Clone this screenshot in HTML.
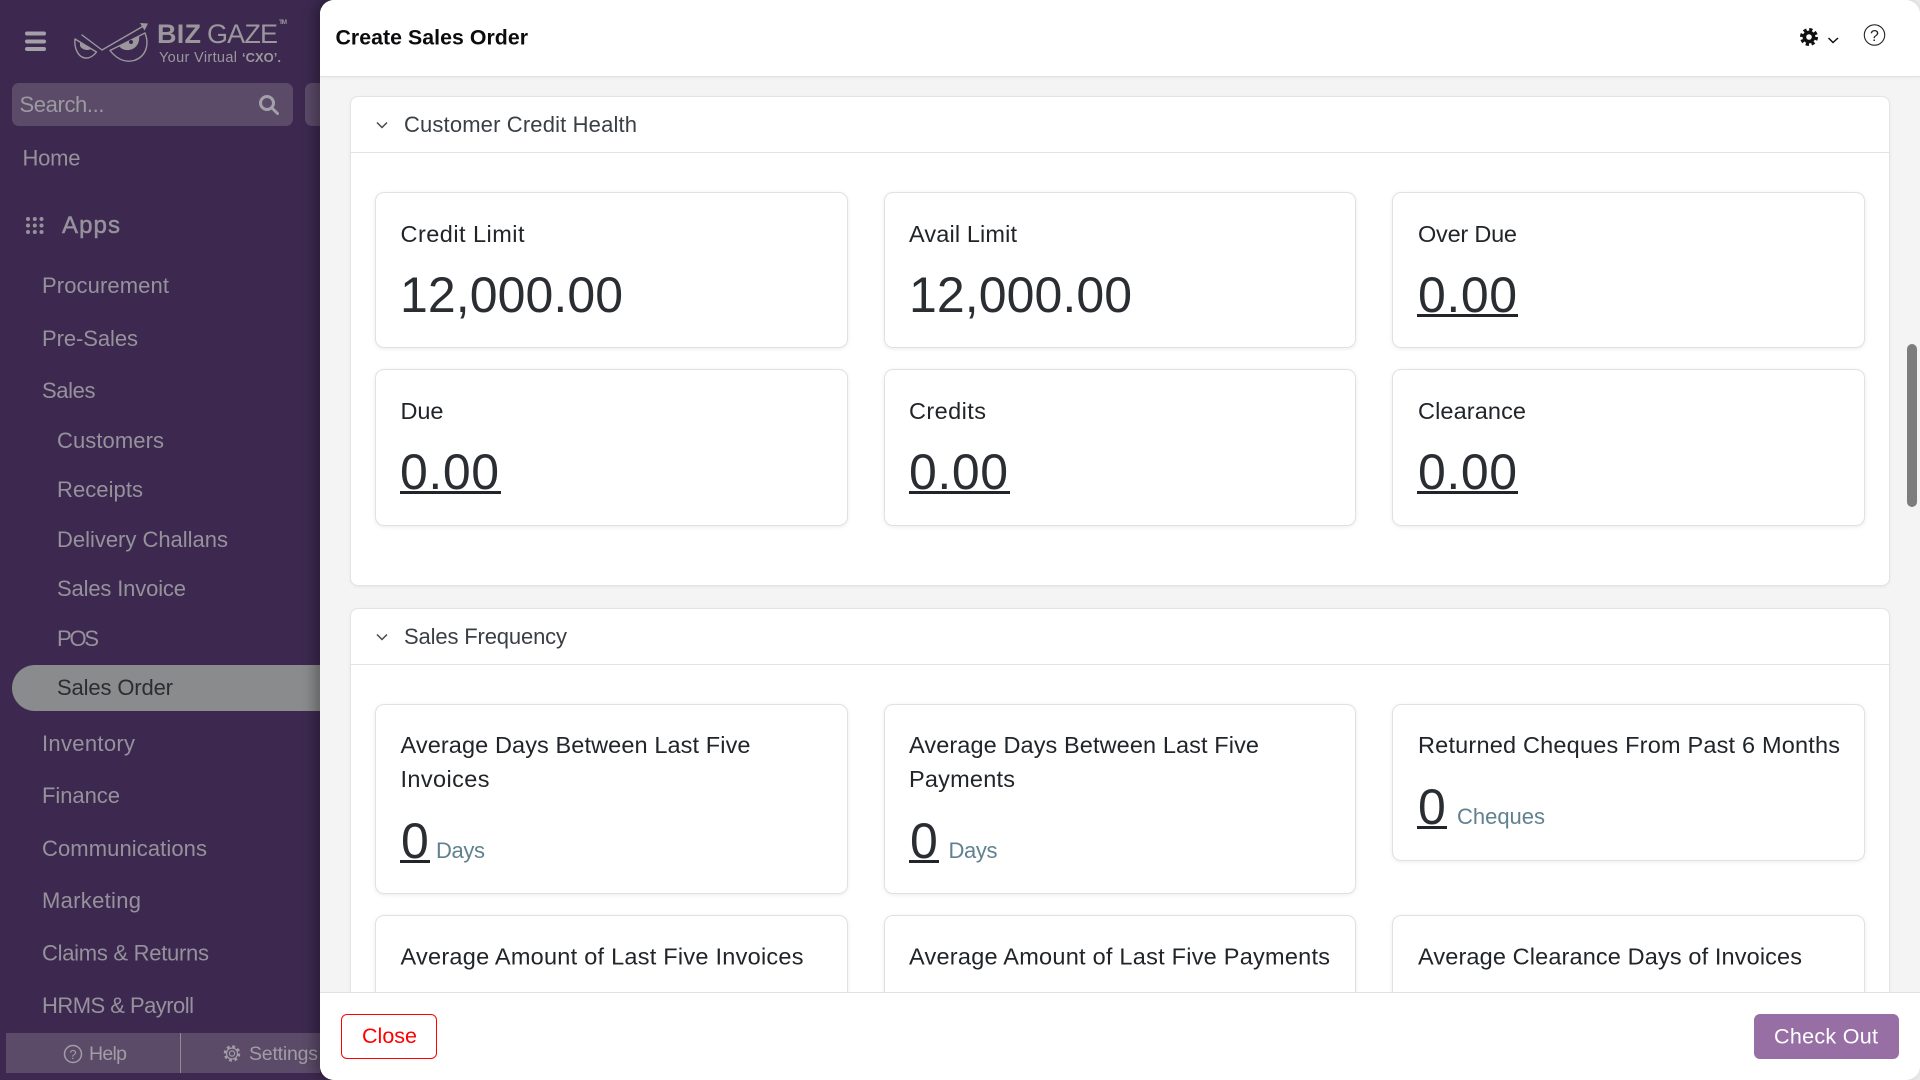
<!DOCTYPE html>
<html lang="en">
<head>
<meta charset="utf-8">
<title>Create Sales Order</title>
<style>
html,body{margin:0;padding:0;width:1920px;height:1080px;overflow:hidden;background:#3d2950;font-family:"Liberation Sans",Arial,sans-serif}
.abs,svg.layer{position:absolute}
svg.layer{left:0;top:0;width:1920px;height:1080px;overflow:hidden}
.search{background:#5b4a68;border-radius:7px;height:43px;top:83px}
.pill{left:12px;top:665px;width:308px;height:46px;background:#8a8b8c;border-radius:23px 0 0 23px}
.bottombar{left:6px;top:1033px;width:314px;height:40px;background:#5b4a68}
.bottombar i{position:absolute;left:174px;top:0;width:1px;height:40px;background:#8f8a94}
.panel{left:320px;top:0;width:1600px;height:1080px;background:#f4f4f5;border-radius:14px;overflow:hidden;box-shadow:-6px 0 12px rgba(0,0,0,.28)}
.rightbg{left:1880px;top:0;width:40px;height:1080px;background:#ececec}
.clip{left:320px;top:0;width:1600px;height:1080px;overflow:hidden}
.clip>div{position:absolute}
.head{left:320px;top:0;width:1600px;height:76px;background:#fff;border-bottom:1px solid #dfe1e6;border-radius:14px 14px 0 0;box-shadow:0 1px 4px rgba(0,0,0,.05)}
.foot{left:320px;top:992px;width:1600px;height:88px;background:#fff;border-top:1px solid #dfe1e6;box-sizing:border-box;border-radius:0 0 14px 14px}
.thumb{left:1907px;top:344px;width:10px;height:163px;background:#7d7d7d;border-radius:5px}
.section{left:30px;width:1540px;box-sizing:border-box;background:#fff;border:1px solid #e1e3e8;border-radius:8px;box-shadow:0 1px 3px rgba(0,0,0,.06)}
.line{left:31px;width:1538px;height:1px;background:#e1e3e8}
.card{box-sizing:border-box;background:#fff;border:1px solid #dfe1e6;border-radius:9px;box-shadow:0 1px 4px rgba(0,0,0,.08)}
.c1{left:55px;width:473px}.c2{left:564px;width:472px}.c3{left:1072px;width:473px}
.btn{box-sizing:border-box;top:1014px;height:45px;border-radius:6px}
.close{left:341px;width:96px;background:#fff;border:1px solid #f00}
.check{left:1754px;width:145px;background:#976fa5}
text{font-family:"Liberation Sans",Arial,sans-serif}
.s{font-size:22px;fill:#96929c}
.sd{font-size:22px;fill:#2c2c31}
.lb{font-size:23.5px;fill:#212529}
.val{font-size:50px;fill:#2a2e33}
.hd{font-size:22px;fill:#3a3f45}
.unit{font-size:22px;fill:#60818f}
.lg{fill:#9a989d}
</style>
</head>
<body>

<!-- sidebar -->
<div class="abs search" style="left:12px;width:281px"></div>
<div class="abs search" style="left:305px;width:20px"></div>
<div class="abs pill"></div>
<div class="abs bottombar"><i></i></div>

<svg class="layer" viewBox="0 0 1920 1080">
  <!-- hamburger -->
  <g fill="#a3a0a8">
    <rect x="25" y="31.5" width="21" height="4" rx="2"/>
    <rect x="25" y="39.5" width="21" height="4" rx="2"/>
    <rect x="25" y="47" width="21" height="4" rx="2"/>
  </g>
  <!-- logo -->
  <g fill="none" stroke="#9a989d" stroke-width="1.4" stroke-linejoin="round" stroke-linecap="round">
    <path d="M82 35L102 50L146 24.5"/>
    <path d="M75 39L96.5 52C93 56.5 89 58.5 85 58C78 57 74 48 75 39Z"/>
    <path d="M110 50.5L145 33C150 46 145 57 134 60.5C124 63 116 58 110 50.5Z"/>
  </g>
  <path d="M140 23L148 23.5L144.5 30.5Z" fill="#9a989d"/>
  <path d="M80 42L91 49C88 51 82 50 80 46Z" fill="#9a989d"/>
  <path d="M119 46L139 36C140 43 136 49 129 50C125 50.5 121 49 119 46Z" fill="#9a989d"/>
  <circle cx="131" cy="42" r="2" fill="#3d2950"/>
  <text x="157" y="43" class="lg" font-size="27" font-weight="700" textLength="44">BIZ</text>
  <text x="207" y="43" class="lg" font-size="27" textLength="71">GAZE</text>
  <text x="279" y="24" class="lg" font-size="6.5" font-weight="700" textLength="8">TM</text>
  <text x="159" y="62" class="lg" font-size="14.5" textLength="78">Your Virtual</text>
  <text x="242" y="62" class="lg" font-size="13" font-weight="700" textLength="39">‘CXO’.</text>

  <!-- search -->
  <text x="19.5" y="112" font-size="22" fill="#9c9aa1" textLength="85">Search...</text>
  <g fill="none" stroke="#a2a1a7" stroke-width="3">
    <circle cx="267" cy="103" r="6.5"/>
    <path d="M272 108L277.5 113.5" stroke-linecap="round"/>
  </g>

  <text x="22.5" y="165.7" class="s" textLength="58">Home</text>

  <g fill="#96929c">
    <circle cx="28" cy="219" r="2"/><circle cx="34.8" cy="219" r="2"/><circle cx="41.5" cy="219" r="2"/>
    <circle cx="28" cy="225.5" r="2"/><circle cx="34.8" cy="225.5" r="2"/><circle cx="41.5" cy="225.5" r="2"/>
    <circle cx="28" cy="232" r="2"/><circle cx="34.8" cy="232" r="2"/><circle cx="41.5" cy="232" r="2"/>
  </g>
  <text x="62" y="233" font-size="24" fill="#96929c" stroke="#96929c" stroke-width=".5" textLength="58">Apps</text>

  <text x="42" y="293" class="s" textLength="127">Procurement</text>
  <text x="42" y="346" class="s" textLength="96">Pre-Sales</text>
  <text x="42" y="398" class="s" textLength="53.5">Sales</text>
  <text x="57" y="448" class="s" textLength="107">Customers</text>
  <text x="57" y="497" class="s" textLength="86">Receipts</text>
  <text x="57" y="547" class="s" textLength="171">Delivery Challans</text>
  <text x="57" y="596" class="s" textLength="129">Sales Invoice</text>
  <text x="57" y="646" class="s" textLength="42">POS</text>
  <text x="57" y="695" class="sd" textLength="116">Sales Order</text>
  <text x="42" y="751" class="s" textLength="93">Inventory</text>
  <text x="42" y="803" class="s" textLength="78">Finance</text>
  <text x="42" y="856" class="s" textLength="165">Communications</text>
  <text x="42" y="908" class="s" textLength="99">Marketing</text>
  <text x="42" y="960.5" class="s" textLength="167">Claims &amp; Returns</text>
  <text x="42" y="1013" class="s" textLength="152">HRMS &amp; Payroll</text>

  <!-- bottom bar -->
  <g fill="none" stroke="#a09da5" stroke-width="1.5">
    <circle cx="73" cy="1054" r="8.5"/>
  </g>
  <text x="73" y="1059" font-size="13" fill="#a09da5" text-anchor="middle">?</text>
  <text x="89" y="1060" font-size="19.5" fill="#a09da5" textLength="38">Help</text>
  <g fill="none" stroke="#a09da5">
    <circle cx="232" cy="1053.5" r="7" stroke-width="2.6" stroke-dasharray="2.9 2.6"/>
    <circle cx="232" cy="1053.5" r="5.5" stroke-width="1.2"/>
    <circle cx="232" cy="1053.5" r="2.6" stroke-width="1.2"/>
  </g>
  <text x="249" y="1060" font-size="19.5" fill="#a09da5" textLength="69">Settings</text>
</svg>

<!-- main panel -->
<div class="abs rightbg"></div>
<div class="abs panel"></div>
<div class="abs thumb"></div>

<div class="abs clip">
  <div class="section" style="top:96px;height:490px"></div>
  <div class="line" style="top:152px"></div>
  <div class="section" style="top:608px;height:440px"></div>
  <div class="line" style="top:664px"></div>

  <div class="card c1" style="top:192px;height:156px"></div>
  <div class="card c2" style="top:192px;height:156px"></div>
  <div class="card c3" style="top:192px;height:156px"></div>
  <div class="card c1" style="top:369px;height:157px"></div>
  <div class="card c2" style="top:369px;height:157px"></div>
  <div class="card c3" style="top:369px;height:157px"></div>
  <div class="card c1" style="top:704px;height:190px"></div>
  <div class="card c2" style="top:704px;height:190px"></div>
  <div class="card c3" style="top:704px;height:157px"></div>
  <div class="card c1" style="top:915px;height:120px"></div>
  <div class="card c2" style="top:915px;height:120px"></div>
  <div class="card c3" style="top:915px;height:120px"></div>
</div>

<div class="abs head"></div>
<div class="abs foot"></div>
<div class="abs btn close"></div>
<div class="abs btn check"></div>

<svg class="layer" viewBox="0 0 1920 1080">
  <!-- header -->
  <text x="335.5" y="44.5" font-size="21.3" font-weight="700" fill="#0c0c0e" textLength="192.5">Create Sales Order</text>
  <g fill="none" stroke="#111">
    <circle cx="1809" cy="37" r="7.4" stroke-width="3.2" stroke-dasharray="3.2 2.61"/>
    <circle cx="1809" cy="37" r="4.6" stroke-width="3.6"/>
  </g>
  <path d="M1828.5 38L1833 42.5L1838 38" fill="none" stroke="#111" stroke-width="1.5"/>
  <circle cx="1874.5" cy="35" r="10.2" fill="none" stroke="#222" stroke-width="1.1"/>
  <text x="1874.5" y="41" font-size="16" fill="#222" text-anchor="middle">?</text>

  <!-- section 1 -->
  <path d="M377 122.5L382 127.5L387 122.5" fill="none" stroke="#444a50" stroke-width="1.5"/>
  <text x="404" y="132" class="hd" textLength="233">Customer Credit Health</text>

  <text x="400.5" y="242" class="lb" textLength="124">Credit Limit</text>
  <text x="400" y="312" class="val" textLength="223">12,000.00</text>
  <text x="909" y="242" class="lb" textLength="108">Avail Limit</text>
  <text x="909" y="312" class="val" textLength="223">12,000.00</text>
  <text x="1418" y="242" class="lb" textLength="99">Over Due</text>
  <text x="1418" y="312" class="val" textLength="99">0.00</text>
  <rect x="1417" y="314" width="101" height="3" fill="#212529"/>

  <text x="400.5" y="419" class="lb" textLength="43">Due</text>
  <text x="400" y="489" class="val" textLength="99">0.00</text>
  <rect x="400" y="491" width="101" height="3" fill="#212529"/>
  <text x="909" y="419" class="lb" textLength="77">Credits</text>
  <text x="909" y="489" class="val" textLength="99">0.00</text>
  <rect x="909" y="491" width="101" height="3" fill="#212529"/>
  <text x="1418" y="419" class="lb" textLength="108">Clearance</text>
  <text x="1418" y="489" class="val" textLength="99">0.00</text>
  <rect x="1417" y="491" width="101" height="3" fill="#212529"/>

  <!-- section 2 -->
  <path d="M377 634.5L382 639.5L387 634.5" fill="none" stroke="#444a50" stroke-width="1.5"/>
  <text x="404" y="644" class="hd" textLength="163">Sales Frequency</text>

  <text x="400.5" y="753" class="lb" textLength="350">Average Days Between Last Five</text>
  <text x="400.5" y="787" class="lb" textLength="89">Invoices</text>
  <text x="401" y="858" class="val" textLength="28">0</text>
  <rect x="400" y="860" width="30" height="3" fill="#212529"/>
  <text x="436" y="858" class="unit" textLength="49">Days</text>

  <text x="909" y="753" class="lb" textLength="350">Average Days Between Last Five</text>
  <text x="909" y="787" class="lb" textLength="106">Payments</text>
  <text x="910" y="858" class="val" textLength="28">0</text>
  <rect x="909" y="860" width="30" height="3" fill="#212529"/>
  <text x="948.5" y="858" class="unit" textLength="49">Days</text>

  <text x="1418" y="753" class="lb" textLength="422">Returned Cheques From Past 6 Months</text>
  <text x="1418" y="824" class="val" textLength="28">0</text>
  <rect x="1417" y="826" width="30" height="3" fill="#212529"/>
  <text x="1457" y="824" class="unit" textLength="88">Cheques</text>

  <text x="400.5" y="964.5" class="lb" textLength="403">Average Amount of Last Five Invoices</text>
  <text x="909" y="964.5" class="lb" textLength="421">Average Amount of Last Five Payments</text>
  <text x="1418" y="964.5" class="lb" textLength="384">Average Clearance Days of Invoices</text>

  <!-- footer -->
  <text x="362" y="1043" font-size="21.5" fill="#f00" textLength="55">Close</text>
  <text x="1774" y="1043.5" font-size="21.5" fill="#fff" textLength="104">Check Out</text>
</svg>

</body>
</html>
